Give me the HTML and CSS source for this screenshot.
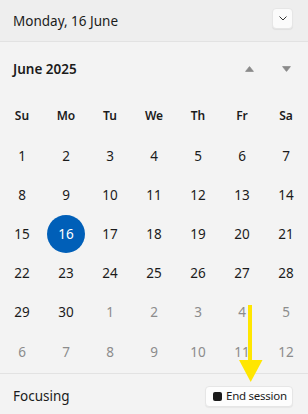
FILE: index.html
```html
<!DOCTYPE html>
<html lang="en">
<head>
<meta charset="utf-8">
<title>Calendar</title>
<link rel="stylesheet" href="styles.css">
</head>
<body>
<div class="panel">
  <header class="header">
    <span class="date-title">Monday, 16 June</span>
    <button class="collapse-btn" aria-label="Collapse">
      <svg width="8" height="5" viewBox="0 0 8 5"><path d="M0.8 0.8 L4 4 L7.2 0.8" fill="none" stroke="#333" stroke-width="1" stroke-linecap="round" stroke-linejoin="round"/></svg>
    </button>
  </header>
  <section class="calendar">
    <div class="month-row">
      <span class="month-title">June 2025</span>
      <div class="nav">
        <button class="nav-btn" aria-label="Previous month">
          <svg width="9" height="6" viewBox="0 0 9 6"><path d="M4.5 0.6 L8.4 5.4 L0.6 5.4 Z" fill="#8a8a8a" stroke="#8a8a8a" stroke-width="0.8" stroke-linejoin="round"/></svg>
        </button>
        <button class="nav-btn" aria-label="Next month">
          <svg width="9" height="6" viewBox="0 0 9 6"><path d="M0.6 0.6 L8.4 0.6 L4.5 5.4 Z" fill="#8a8a8a" stroke="#8a8a8a" stroke-width="0.8" stroke-linejoin="round"/></svg>
        </button>
      </div>
    </div>
    <div class="weekdays">
      <span>Su</span><span>Mo</span><span>Tu</span><span>We</span><span>Th</span><span>Fr</span><span>Sa</span>
    </div>
    <div class="days">
      <span class="day">1</span><span class="day">2</span><span class="day">3</span><span class="day">4</span><span class="day">5</span><span class="day">6</span><span class="day">7</span>
      <span class="day">8</span><span class="day">9</span><span class="day">10</span><span class="day">11</span><span class="day">12</span><span class="day">13</span><span class="day">14</span>
      <span class="day">15</span><span class="day selected"><span class="sel-circle">16</span></span><span class="day">17</span><span class="day">18</span><span class="day">19</span><span class="day">20</span><span class="day">21</span>
      <span class="day">22</span><span class="day">23</span><span class="day">24</span><span class="day">25</span><span class="day">26</span><span class="day">27</span><span class="day">28</span>
      <span class="day">29</span><span class="day">30</span><span class="day other">1</span><span class="day other">2</span><span class="day other">3</span><span class="day other">4</span><span class="day other">5</span>
      <span class="day other">6</span><span class="day other">7</span><span class="day other">8</span><span class="day other">9</span><span class="day other">10</span><span class="day other">11</span><span class="day other">12</span>
    </div>
  </section>
  <footer class="footer">
    <span class="status">Focusing</span>
    <button class="end-btn"><span class="stop-icon"></span><span class="end-label">End session</span></button>
  </footer>
  <svg class="annotation" width="308" height="414" viewBox="0 0 308 414" aria-hidden="true">
    <line x1="250" y1="305" x2="250" y2="364" stroke="#ffe600" stroke-width="4"/>
    <path d="M239 360 L262.5 360 L250.7 382 Z" fill="#ffe600"/>
  </svg>
</div>
</body>
</html>
```
FILE: styles.css
```css
* { box-sizing: border-box; }
html, body {
  margin: 0;
  padding: 0;
}
body {
  width: 308px;
  height: 414px;
  overflow: hidden;
  background: #f3f3f3;
  font-family: "Noto Sans", "Open Sans", sans-serif;
  color: #1b1b1b;
}
button {
  font-family: inherit;
  cursor: pointer;
}
.panel {
  position: relative;
  width: 308px;
  height: 414px;
  display: flex;
  flex-direction: column;
}
.header {
  height: 42px;
  background: #eeeeee;
  border-bottom: 1px solid #e2e2e2;
  display: flex;
  align-items: center;
  justify-content: space-between;
  padding: 0 15px 0 13px;
}
.date-title {
  font-size: 13.5px;
  color: #1b1b1b;
}
.collapse-btn {
  width: 21px;
  height: 21px;
  margin-bottom: 4px;
  padding: 0;
  border: 1px solid #e6e6e6;
  border-radius: 4px;
  background: #fbfbfb;
  box-shadow: 0 1px 1px rgba(0,0,0,0.06);
  display: flex;
  align-items: center;
  justify-content: center;
}
.calendar {
  display: flex;
  flex-direction: column;
}
.month-row {
  height: 54px;
  display: flex;
  align-items: center;
  justify-content: space-between;
  padding: 0 7px 0 13px;
}
.month-title {
  font-size: 13.5px;
  font-weight: 600;
}
.nav {
  display: flex;
  gap: 7px;
}
.nav-btn {
  width: 30px;
  height: 30px;
  padding: 0;
  border: none;
  background: transparent;
  display: flex;
  align-items: center;
  justify-content: center;
}
.weekdays {
  display: grid;
  grid-template-columns: repeat(7, 44px);
  height: 38px;
  align-items: center;
  justify-items: center;
  font-size: 12px;
  font-weight: 600;
}
.days {
  margin-top: 2px;
  display: grid;
  grid-template-columns: repeat(7, 44px);
  grid-auto-rows: 39.2px;
  align-items: center;
  justify-items: center;
  font-size: 13.5px;
}
.day {
  display: flex;
  align-items: center;
  justify-content: center;
}
.day.other {
  color: #8c8c8c;
}
.sel-circle {
  width: 38px;
  height: 38px;
  border-radius: 50%;
  background: #005fb8;
  color: #ffffff;
  display: flex;
  align-items: center;
  justify-content: center;
}
.footer {
  margin-top: auto;
  height: 41px;
  border-top: 1px solid #e2e2e2;
  display: flex;
  align-items: center;
  justify-content: space-between;
  padding: 4px 15px 0 13px;
}
.status {
  font-size: 13.5px;
}
.end-btn {
  height: 21px;
  width: 88px;
  padding: 0 0 0 7px;
  border: 1px solid #e6e6e6;
  border-radius: 4px;
  background: #fdfdfd;
  box-shadow: 0 1px 1px rgba(0,0,0,0.05);
  display: flex;
  align-items: center;
  gap: 4px;
  font-size: 11.5px;
  letter-spacing: -0.25px;
  color: #1b1b1b;
  white-space: nowrap;
}
.end-label {
  line-height: 1;
}
.stop-icon {
  width: 9px;
  height: 9px;
  border-radius: 2px;
  background: #1b1b1b;
  flex: none;
}
.annotation {
  position: absolute;
  left: 0;
  top: 0;
  pointer-events: none;
}
```
